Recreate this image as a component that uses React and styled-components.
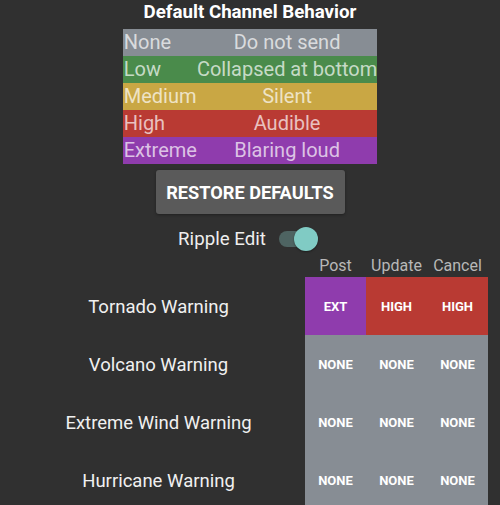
import styled, { createGlobalStyle } from "styled-components";

const GlobalStyle = createGlobalStyle`
  html, body {
    margin: 0;
    padding: 0;
    background: #303030;
    font-family: Roboto, "Noto Sans", sans-serif;
    color: #fff;
  }
`;

const LEVELS = {
  none: { label: "None", text: "Do not send", bg: "#878d94", short: "NONE" },
  low: { label: "Low", text: "Collapsed at bottom", bg: "#4a8b4b", short: "LOW" },
  medium: { label: "Medium", text: "Silent", bg: "#c9a744", short: "MED" },
  high: { label: "High", text: "Audible", bg: "#b93a33", short: "HIGH" },
  extreme: { label: "Extreme", text: "Blaring loud", bg: "#8f3cad", short: "EXT" },
};

const Page = styled.div`
  width: 500px;
  height: 505px;
  overflow: hidden;
  display: flex;
  flex-direction: column;
  align-items: center;
`;

const Title = styled.h2`
  flex: none;
  margin: 0;
  font-size: 18.7px;
  font-weight: 700;
  line-height: 24px;
  color: #fff;
`;

const LegendTable = styled.table`
  flex: none;
  margin-top: 5px;
  border-collapse: collapse;
  font-size: 20px;
  color: rgba(255, 255, 255, 0.7);
`;

const LegendRow = styled.tr`
  background: ${(p) => p.$bg};
  height: 27px;
`;

const LegendCell = styled.td`
  padding: 0 0 0 ${(p) => (p.$align === "left" ? "1px" : "0")};
  text-align: ${(p) => p.$align};
  line-height: 27px;
  white-space: nowrap;
`;

const RestoreButton = styled.button`
  flex: none;
  box-sizing: border-box;
  margin-top: 6px;
  width: 189px;
  height: 44px;
  padding: 0;
  border: none;
  border-radius: 3px;
  background: #5a5a5a;
  color: #fff;
  font-family: Roboto, sans-serif;
  font-size: 18.2px;
  font-weight: 700;
  box-shadow: 0 1px 3px rgba(0, 0, 0, 0.35);
`;

const RippleRow = styled.div`
  flex: none;
  margin-top: 12px;
  display: flex;
  align-items: center;
  gap: 13px;
  height: 26px;
  padding-right: 4px;
`;

const RippleLabel = styled.span`
  font-size: 18.7px;
  color: #eee;
`;

const Switch = styled.div`
  position: relative;
  width: 39px;
  height: 24px;
`;

const Track = styled.div`
  position: absolute;
  left: 0;
  top: 4px;
  width: 32px;
  height: 16px;
  border-radius: 8px;
  background: #4e6462;
`;

const Thumb = styled.div`
  position: absolute;
  right: 0;
  top: 0;
  width: 24px;
  height: 24px;
  border-radius: 50%;
  background: #80cbc4;
  box-shadow: 0 1px 2px rgba(0, 0, 0, 0.4);
`;

const Grid = styled.div`
  flex: none;
  margin-top: 3px;
  align-self: stretch;
  padding: 0 12px;
  display: grid;
  grid-template-columns: 1fr 61px 61px 61px;
  grid-auto-rows: 58px;
  grid-template-rows: 22px;
`;

const Head = styled.div`
  font-size: 16px;
  color: #b8b8b8;
  text-align: center;
  line-height: 22px;
`;

const RowLabel = styled.div`
  display: flex;
  align-items: center;
  justify-content: center;
  font-size: 18.5px;
  color: #f0f0f0;
  padding-top: 2px;
`;

const LevelCell = styled.div`
  display: flex;
  align-items: center;
  justify-content: center;
  background: ${(p) => p.$bg};
  font-size: 13px;
  font-weight: 700;
  color: #fff;
  padding-top: 1px;
`;

const warnings = [
  { name: "Tornado Warning", levels: ["extreme", "high", "high"] },
  { name: "Volcano Warning", levels: ["none", "none", "none"] },
  { name: "Extreme Wind Warning", levels: ["none", "none", "none"] },
  { name: "Hurricane Warning", levels: ["none", "none", "none"] },
];

export default function App() {
  return (
    <Page>
      <GlobalStyle />
      <Title>Default Channel Behavior</Title>
      <LegendTable>
        <tbody>
          {Object.values(LEVELS).map((lvl) => (
            <LegendRow key={lvl.label} $bg={lvl.bg}>
              <LegendCell $align="left">{lvl.label}</LegendCell>
              <LegendCell $align="center">{lvl.text}</LegendCell>
            </LegendRow>
          ))}
        </tbody>
      </LegendTable>
      <RestoreButton>RESTORE DEFAULTS</RestoreButton>
      <RippleRow>
        <RippleLabel>Ripple Edit</RippleLabel>
        <Switch>
          <Track />
          <Thumb />
        </Switch>
      </RippleRow>
      <Grid>
        <div />
        <Head>Post</Head>
        <Head>Update</Head>
        <Head>Cancel</Head>
        {warnings.map((w) => [
          <RowLabel key={w.name}>{w.name}</RowLabel>,
          ...w.levels.map((l, i) => (
            <LevelCell key={w.name + i} $bg={LEVELS[l].bg}>
              {LEVELS[l].short}
            </LevelCell>
          )),
        ])}
      </Grid>
    </Page>
  );
}
